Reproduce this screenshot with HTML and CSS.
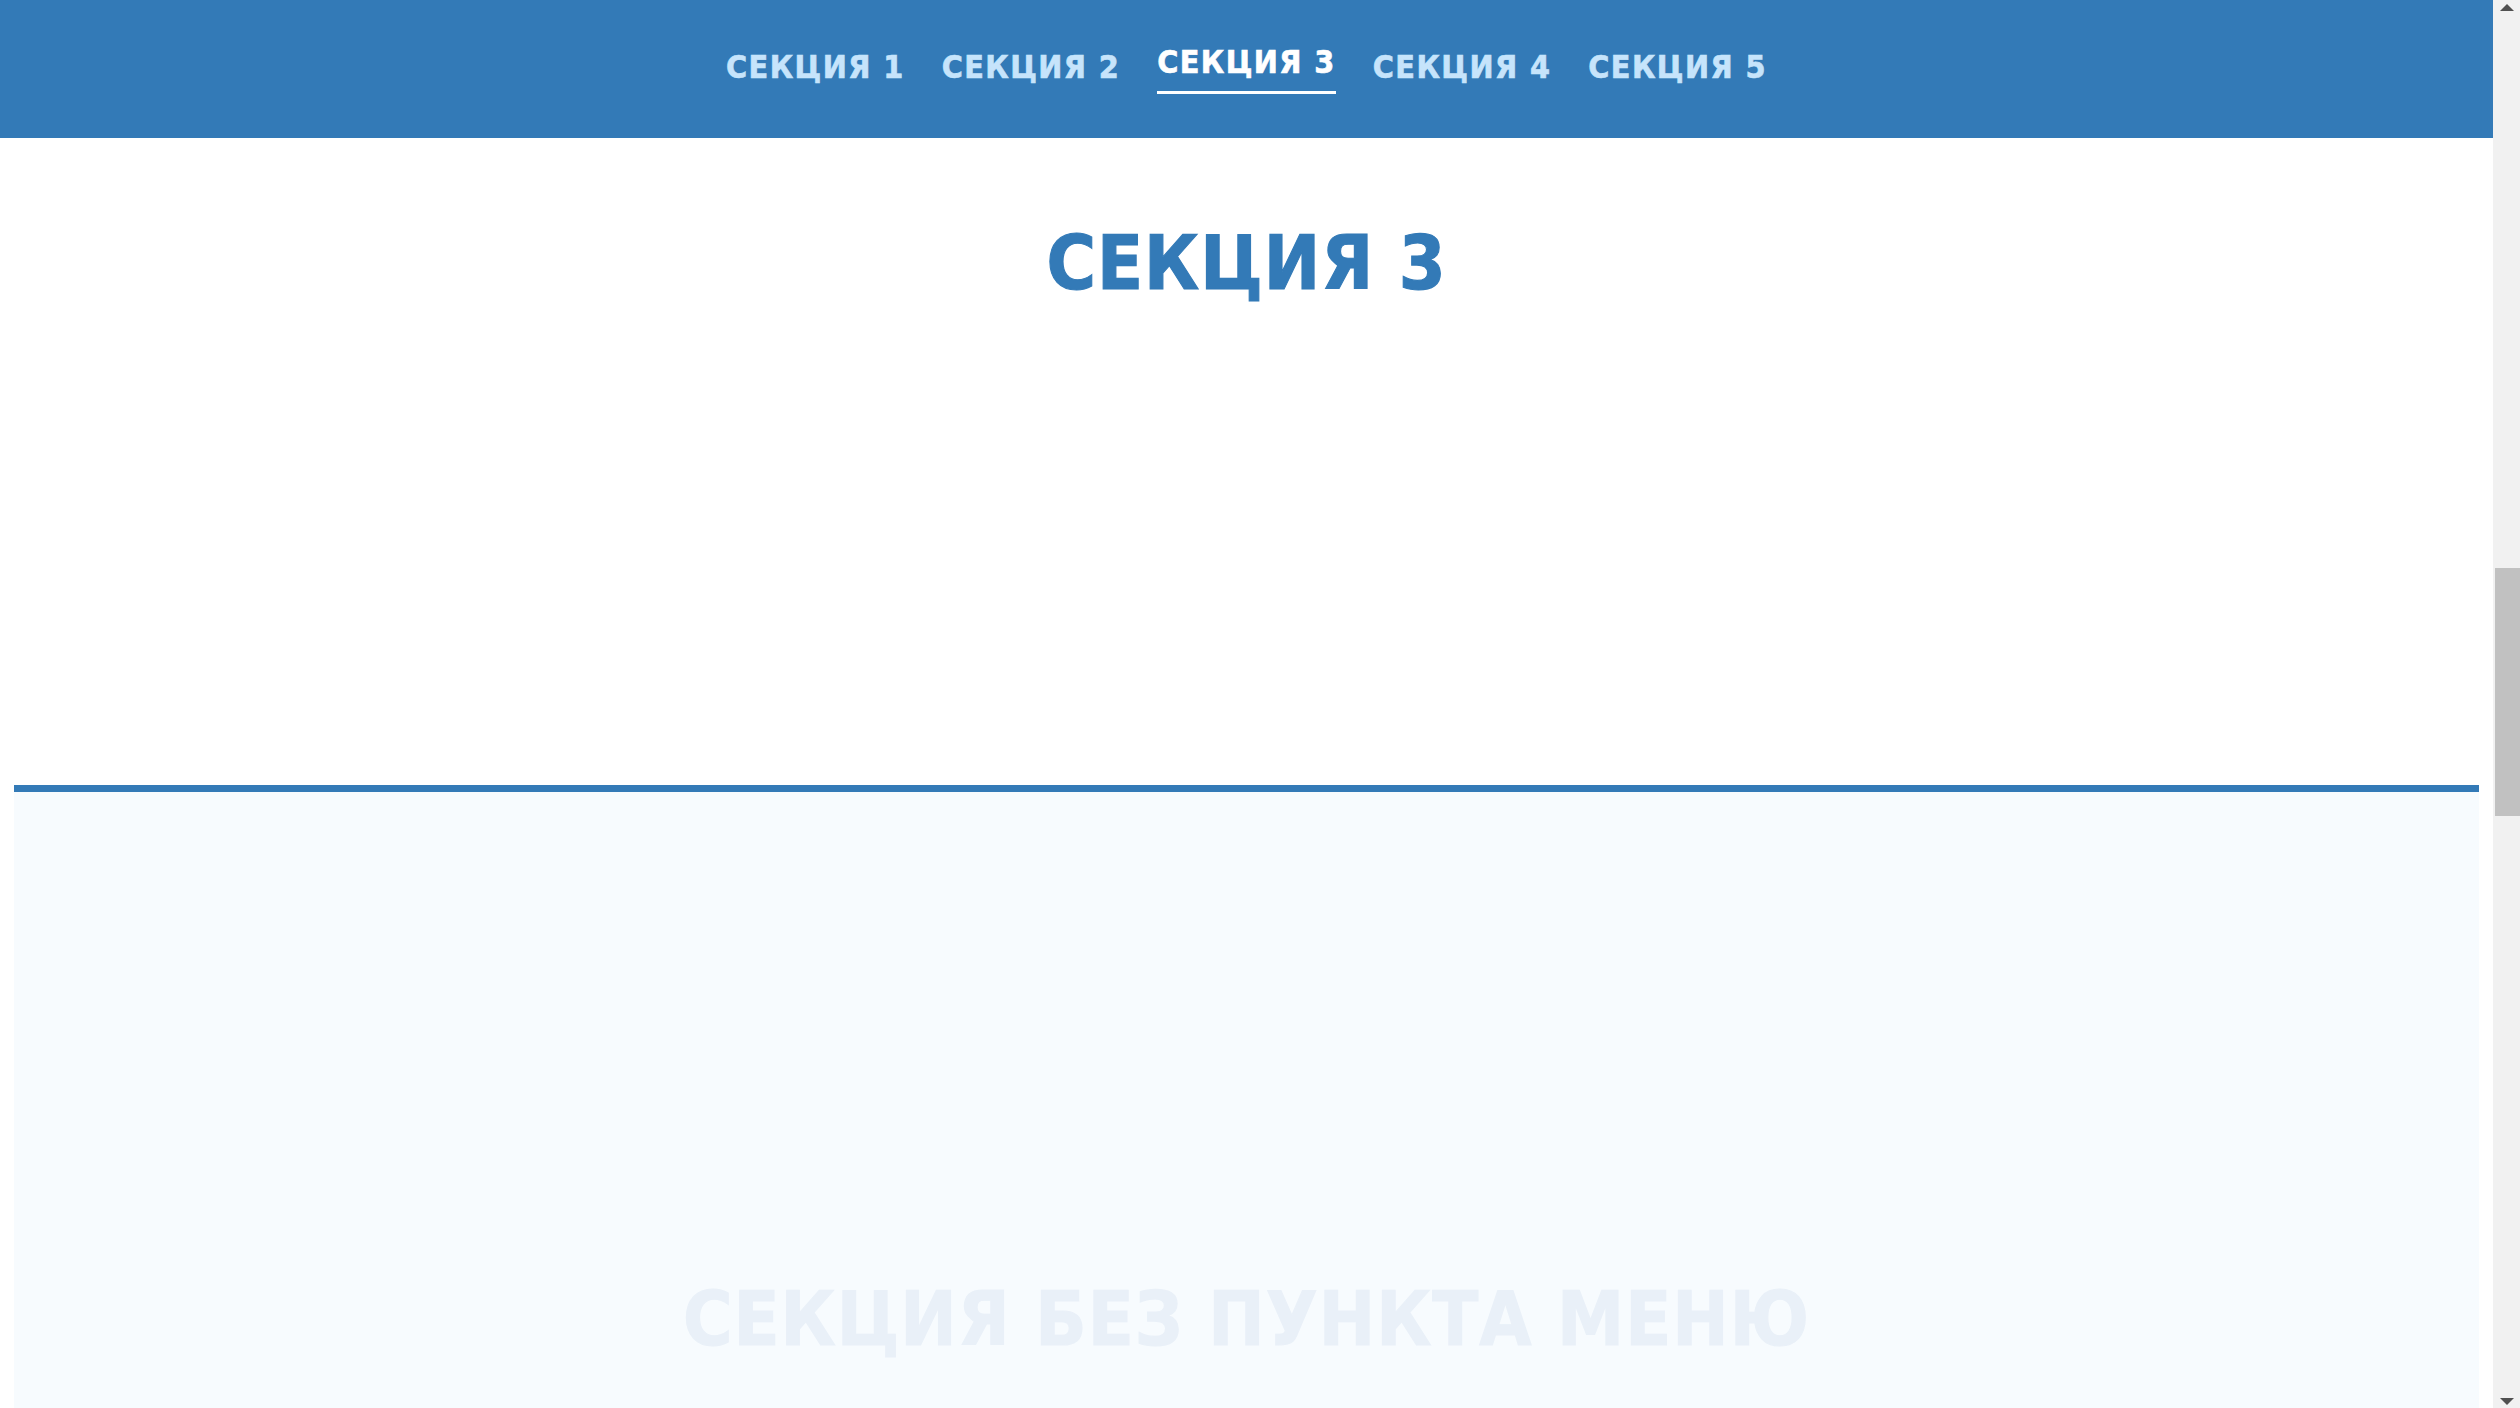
FILE: index.html
```html
<!DOCTYPE html>
<html lang="ru">
<head>
<meta charset="utf-8">
<title>Секции</title>
<link rel="stylesheet" href="styles.css">
</head>
<body>
<div class="viewport">
  <div class="page">
    <header class="topbar">
      <nav class="menu">
        <a class="menu-link" href="#s1">СЕКЦИЯ 1</a>
        <a class="menu-link" href="#s2">СЕКЦИЯ 2</a>
        <a class="menu-link active" href="#s3">СЕКЦИЯ 3</a>
        <a class="menu-link" href="#s4">СЕКЦИЯ 4</a>
        <a class="menu-link" href="#s5">СЕКЦИЯ 5</a>
      </nav>
    </header>
    <main class="content">
      <section class="section section-white" id="s3">
        <h1 class="section-title">СЕКЦИЯ 3</h1>
      </section>
      <section class="section section-plain">
        <h2 class="section-title faint">СЕКЦИЯ БЕЗ ПУНКТА МЕНЮ</h2>
      </section>
    </main>
  </div>
  <div class="scrollbar">
    <div class="sb-arrow sb-up"></div>
    <div class="sb-track">
      <div class="sb-thumb"></div>
    </div>
    <div class="sb-arrow sb-down"></div>
  </div>
</div>
</body>
</html>
```

FILE: styles.css
```css
html, body {
  margin: 0;
  padding: 0;
  height: 100%;
  overflow: hidden;
  background: #ffffff;
  font-family: "DejaVu Sans Condensed", "DejaVu Sans", Verdana, sans-serif;
}

.viewport {
  display: flex;
  height: 1408px;
  width: 2520px;
}

.page {
  flex: 1;
  display: flex;
  flex-direction: column;
  min-width: 0;
  overflow: hidden;
}

.topbar {
  flex: 0 0 138px;
  background: #337ab7;
}

.menu {
  display: flex;
  justify-content: center;
  align-items: flex-start;
  gap: 37px;
  padding-top: 44px;
}

.menu-link {
  display: block;
  font-weight: bold;
  font-size: 32px;
  line-height: 37px;
  letter-spacing: 1.4px;
  -webkit-text-stroke: 0.6px currentColor;
  color: #c6e4fb;
  text-decoration: none;
  margin-top: 5px;
}

.menu-link.active {
  color: #ffffff;
  margin-top: 0;
  padding-bottom: 10px;
  border-bottom: 3px solid #ffffff;
}

.content {
  flex: 1;
  padding: 0 14px;
  display: flex;
  flex-direction: column;
}

.section {
  text-align: center;
}

.section-white {
  height: 647px;
  background: #ffffff;
}

.section-plain {
  flex: 1;
  background: #f7fbfe;
  border-top: 7px solid #337ab7;
}

.section-title {
  margin: 0;
  font-weight: bold;
  font-size: 75px;
  line-height: 87px;
  letter-spacing: 1px;
  -webkit-text-stroke: 1.1px currentColor;
  color: #337ab7;
}

.section-white .section-title {
  padding-top: 82px;
}

.section-plain .section-title {
  padding-top: 484px;
}

.faint {
  color: #e9f0f8;
}

.scrollbar {
  flex: 0 0 27px;
  background: #f1f1f1;
  display: flex;
  flex-direction: column;
}

.sb-arrow {
  flex: 0 0 27px;
  display: flex;
  justify-content: center;
  align-items: center;
}

.sb-up::before {
  content: "";
  width: 0;
  height: 0;
  border-left: 7px solid transparent;
  border-right: 7px solid transparent;
  border-bottom: 7px solid #505050;
  margin-top: -13px;
}

.sb-down::before {
  content: "";
  width: 0;
  height: 0;
  border-left: 7px solid transparent;
  border-right: 7px solid transparent;
  border-top: 7px solid #505050;
  margin-top: 13px;
}

.sb-track {
  flex: 1;
  padding: 541px 0 0 2px;
}

.sb-thumb {
  height: 248px;
  background: #c1c1c1;
}
```
